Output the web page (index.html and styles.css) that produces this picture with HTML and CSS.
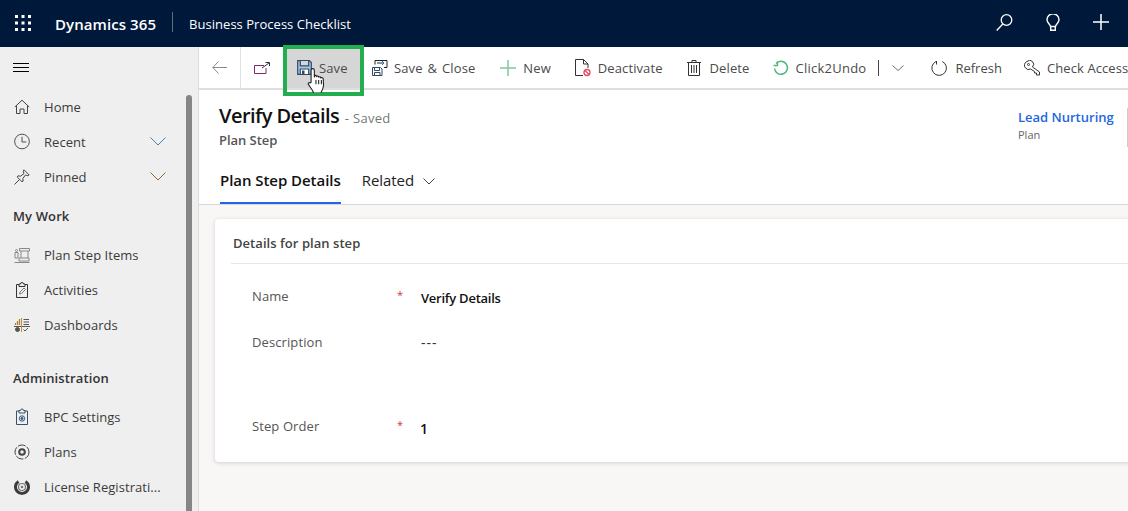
FILE: index.html
```html
<!DOCTYPE html>
<html lang="en">
<head>
<meta charset="utf-8">
<title>Business Process Checklist</title>
<link rel="stylesheet" href="styles.css">
</head>
<body>
<header class="topbar">
  <svg class="waffle" width="16" height="16" viewBox="0 0 16 16"><g fill="#fff"><rect x="0" y="0" width="3" height="3"/><rect x="6.500" y="0" width="3" height="3"/><rect x="13" y="0" width="3" height="3"/><rect x="0" y="6.500" width="3" height="3"/><rect x="6.500" y="6.500" width="3" height="3"/><rect x="13" y="6.500" width="3" height="3"/><rect x="0" y="13" width="3" height="3"/><rect x="6.500" y="13" width="3" height="3"/><rect x="13" y="13" width="3" height="3"/></g></svg>
  <span class="brand">Dynamics 365</span>
  <span class="divider"></span>
  <span class="appname">Business Process Checklist</span>
  <div class="top-actions">
    <svg width="17" height="17" viewBox="0 0 17 17" fill="none" stroke="#fff" stroke-width="1.300"><circle cx="10.500" cy="6" r="5.300"/><path d="M6.800 10L.7 16.500"/></svg>
    <svg width="14" height="17" viewBox="0 0 14 17" fill="none" stroke="#fff" stroke-width="1.400"><path d="M4.500 12.500C4 9.500 1 9 1 5.800a6 6 0 0 1 12 0c0 3.200-3 3.700-3.500 6.700zM4.700 12.500v3.800h4.600v-3.800"/></svg>
    <svg width="16" height="16" viewBox="0 0 16 16" stroke="#fff" stroke-width="1.500"><path d="M8 0v16M0 8h16"/></svg>
  </div>
</header>
<div class="shell">
  <nav class="sidebar">
    <button class="hamburger" aria-label="Menu"><svg width="16" height="10" viewBox="0 0 16 10" stroke="#000" stroke-width="1"><path d="M0 .5h16M0 4.500h16M0 8.500h16"/></svg></button>
    <div class="scrollbar"></div>
    <ul class="navlist first">
      <li><svg class="ni" width="16" height="16" viewBox="0 0 16 16" fill="none" stroke="#444" stroke-width="1"><path d="M.8 8L8 1.200 15.200 8M2.500 6.500V14.500H6V10h4v4.500h3.500V6.500"/></svg>Home</li>
      <li><svg class="ni" width="16" height="17" viewBox="0 0 17 17" fill="none" stroke="#444" stroke-width="1"><circle cx="8.500" cy="8.500" r="7.800"/><path d="M8.500 3.500V9H13"/></svg>Recent<svg class="chev" width="16" height="9" viewBox="0 0 16 9" fill="none" stroke="#4a7fb0" stroke-width="1"><path d="M.5.500L8 8l7.500-7.500"/></svg></li>
      <li><svg class="ni" width="16" height="16" viewBox="0 0 16 16" fill="none" stroke="#444" stroke-width="1"><path d="M10 .8L15.200 6 13.800 6.700 11.500 6 8.800 9.500 9.200 12 8 12.800 3.200 8 4 6.800 6.500 7.200 10 4.500 9.300 2.200zM5.500 10.500L.5 15.500"/></svg>Pinned<svg class="chev" width="16" height="9" viewBox="0 0 16 9" fill="none" stroke="#8a6a30" stroke-width="1"><path d="M.5.500L8 8l7.500-7.500"/></svg></li>
    </ul>
    <h2 class="group group-work">My Work</h2>
    <ul class="navlist">
      <li><svg class="ni" width="16" height="16" viewBox="0 0 16 16" fill="none" stroke="#888" stroke-width="1"><path d="M5.500 1.500H15.500V4H5.500zM7 4v7M14 4v7M5 11h10v3H5zM1 5.500h3V11H1zM2.500 2.500a1 1 0 1 1 0 2 1 1 0 1 1 0-2zM.5 15.500h15"/></svg>Plan Step Items</li>
      <li><svg class="ni" width="16" height="16" viewBox="0 0 16 16" fill="none" stroke="#333" stroke-width="1"><path d="M5 2.500H2.500v13h11v-13H11M5 4.500V2H6.500a1.500 1.500 0 0 1 3 0H11v2.500z"/><path d="M5.500 12l.5-2 4-4 1.500 1.500-4 4z" stroke="#777"/></svg>Activities</li>
      <li><svg class="ni" width="16" height="16" viewBox="0 0 16 16" fill="none" stroke="#555" stroke-width="1"><path d="M0 9.500h16"/><path d="M7.500 1v14" stroke="#c98a3a"/><path d="M1.500 8V6M3.500 8V4M5.500 8V2" stroke="#b57b34" stroke-width="1.300"/><path d="M9.500 2.500H15M9.500 5H15M9.500 7.500H15M9.500 12.500l1.500 1.500 3-3"/><circle cx="3.500" cy="12.500" r="2" fill="#555"/></svg>Dashboards</li>
    </ul>
    <h2 class="group group-admin">Administration</h2>
    <ul class="navlist">
      <li><svg class="ni" width="16" height="17" viewBox="0 0 16 17" fill="none" stroke="#33536f" stroke-width="1"><path d="M5 3H2.500v13.500h11V3H11M5 5V2.500H6.500a1.500 1.500 0 0 1 3 0H11V5z"/><circle cx="8" cy="10.500" r="2.700"/><circle cx="8" cy="10.500" r="1" fill="#33536f"/></svg>BPC Settings</li>
      <li><svg class="ni" width="16" height="16" viewBox="0 0 16 16" fill="none" stroke="#444"><circle cx="8" cy="8" r="7" stroke-width="1" stroke-dasharray="8 1.500"/><circle cx="8" cy="8" r="2.800" stroke-width="2"/></svg>Plans</li>
      <li><svg class="ni" width="16" height="16" viewBox="0 0 16 16" fill="none"><path d="M4.500 2.500a6.500 6.500 0 1 0 7 0" stroke="#3c3c3c" stroke-width="3"/><circle cx="8" cy="8" r="3.500" stroke="#777" stroke-width="1.200"/><circle cx="8" cy="8" r="1.300" fill="#777"/></svg><span class="trunc">License Registrati...</span></li>
    </ul>
  </nav>
  <main class="content">
    <div class="commandbar">
      <button class="cmd back" aria-label="Back"><svg width="15" height="13" viewBox="0 0 15 13" fill="none" stroke="#8a8a8a" stroke-width="1"><path d="M6.500.5L.8 6.500l5.700 6M1 6.500h14"/></svg></button>
      <button class="cmd popout" aria-label="Open"><svg width="16" height="12" viewBox="0 0 16 12" fill="none" stroke-width="1"><path d="M10 3.500H.5v8H12V6" stroke="#7a2a6a"/><path d="M8 6l7-5M11.500 .5H15.500V4" stroke="#333"/></svg></button>
      <button class="cmd save"><svg width="15" height="15" viewBox="0 0 15 15" fill="none" stroke="#2e4a66" stroke-width="1.200"><path d="M.7.700H12.500L14.300 2.500v11.800H.7z" fill="#a9cbe8"/><path d="M3.300 1v4.800h8.400V1" fill="#d6d6d6"/><path d="M3.300 14V9h8.400v5" fill="#fff"/><rect x="5" y="10.500" width="2.500" height="3.500" fill="#2e4a66" stroke="none"/></svg><span>Save</span></button>
      <button class="cmd saveclose"><svg width="16" height="16" viewBox="0 0 16 16" fill="none" stroke="#2e4a66" stroke-width="1"><path d="M.5 7.500H8.500L10 9v6.500H.5zM2.500 7.500v3h5v-3M2.500 15.500v-3h5.500v3"/><path d="M3 4.500V.5h12v7h-3M5 3h7" stroke="#222"/><path d="M10 1l2 2-2 2" stroke="#2b78c5"/></svg><span>Save &amp; Close</span></button>
      <button class="cmd new"><svg width="16" height="16" viewBox="0 0 16 16" stroke="#7fc8a0" stroke-width="1.500"><path d="M8 0v16M0 8h16"/></svg><span>New</span></button>
      <button class="cmd deact"><svg width="16" height="18" viewBox="0 0 16 18" fill="none" stroke="#333" stroke-width="1"><path d="M8 16.500H.5V.5H8.500L13 5V9M8.500.5V5H13"/><circle cx="12" cy="13.500" r="3" stroke="#e04c5e" stroke-width="1.300"/><path d="M10 11.500l4 4" stroke="#e04c5e" stroke-width="1.300"/></svg><span>Deactivate</span></button>
      <button class="cmd del"><svg width="14" height="16" viewBox="0 0 14 16" fill="none" stroke="#333" stroke-width="1"><path d="M0 2.500h14M5 2.500V.5h4v2M1.500 2.500v13h11v-13M4.500 5v8M7 5v8M9.500 5v8"/></svg><span>Delete</span></button>
      <button class="cmd undo"><svg width="16" height="16" viewBox="0 0 16 16" fill="none" stroke="#4ab87a" stroke-width="1.500"><path d="M3 3.500A6.500 6.500 0 1 1 1.500 8.500"/><path d="M.5 5.500H4.500V1.500" stroke-width="1.300"/></svg><span>Click2Undo</span></button>
      <span class="cmd-sep"></span>
      <svg class="cmd-chev" width="12" height="6" viewBox="0 0 12 6" fill="none" stroke="#6b6b6b" stroke-width="1"><path d="M.5.500L6 5.500l5.500-5"/></svg>
      <button class="cmd refresh"><svg width="16" height="16" viewBox="0 0 16 16" fill="none" stroke="#333" stroke-width="1"><path d="M5 1.500A7.300 7.300 0 1 0 11.300 1.500M5.500 1V4.500"/></svg><span>Refresh</span></button>
      <button class="cmd access"><svg width="16" height="16" viewBox="0 0 16 16" fill="none" stroke="#333" stroke-width="1"><path d="M3 1.500a4 4 0 0 1 5.500 0 4 4 0 0 1 0 5.500L15.500 12v3h-3v-2h-2v-1.500L6.500 9a4 4 0 0 1-5-1 4 4 0 0 1 1.500-6.500z"/><circle cx="4.500" cy="4.500" r="1"/></svg><span>Check Access</span></button>
    </div>
    <section class="formhead">
      <div class="titles">
        <h1>Verify Details <small>- Saved</small></h1>
        <p class="entity">Plan Step</p>
      </div>
      <div class="headright">
        <a class="lead" href="#">Lead Nurturing</a>
        <span class="leadsub">Plan</span>
      </div>
    </section>
    <div class="tabs">
      <span class="tab active">Plan Step Details</span>
      <span class="tab">Related<svg width="12" height="7" viewBox="0 0 12 7" fill="none" stroke="#444" stroke-width="1"><path d="M.5.500L6 6l5.500-5.500"/></svg></span>
    </div>
    <div class="canvas">
      <section class="card">
        <h3>Details for plan step</h3>
        <div class="rows">
          <div class="row r-name"><label>Name</label><span class="req">*</span><strong>Verify Details</strong></div>
          <div class="row r-desc"><label>Description</label><span class="req"></span><span class="val dash">---</span></div>
          <div class="row r-order"><label>Step Order</label><span class="req">*</span><span class="val num">1</span></div>
        </div>
      </section>
    </div>
  </main>
</div>
<div class="highlight">
  <svg class="hand" width="19" height="26" viewBox="0 0 17 24"><path d="M5 1.500c1 0 1.500.5 1.500 1.500v6.500l.5-2c1 0 1.500.5 1.500 1.200.8-.6 1.800-.3 2 .6.800-.5 1.800-.2 2 .7.800-.4 2-.1 2.200 1l.3 5.500c0 3-1.500 5.500-2.500 7.500H6c-1-2.500-3-5-5-8-.5-1 .5-2 1.700-1.300L3.500 14V3c0-1 .6-1.500 1.500-1.500z" fill="#fff" stroke="#222" stroke-width="1"/><path d="M8 12v4M10.500 12v4M13 12v4" stroke="#222" stroke-width="1"/></svg>
</div>
</body>
</html>
```
FILE: styles.css
```css
* { box-sizing: border-box; }
html, body { margin: 0; height: 100%; overflow: hidden; }
body { font-family: "Open Sans", "Noto Sans", sans-serif; color: #333; background: #fff; position: relative; font-size: 13px; }
button { font: inherit; color: inherit; border: 0; background: none; padding: 0; }
ul { list-style: none; margin: 0; padding: 0; }
h1, h2, h3, p { margin: 0; }

.topbar { height: 47px; background: #001839; color: #fff; display: flex; align-items: center; padding-left: 15px; }
.waffle { flex: none; margin-bottom: 2px; }
.brand { margin-left: 24px; font-size: 15px; font-weight: 600; letter-spacing: .08px; }
.divider { width: 1px; height: 20px; background: #5f6c80; margin: 0 16px 3px; }
.appname { font-size: 13px; letter-spacing: .03px; }
.top-actions { margin-left: auto; display: flex; align-items: center; gap: 33px; padding: 0 19px 3px 0; }

.shell { display: flex; height: 464px; }
.sidebar { width: 199px; flex: none; background: #efefef; border-right: 1px solid #dcdcdc; position: relative; padding-top: 7px; }
.hamburger { display: block; height: 28px; margin-left: 13px; }
.scrollbar { position: absolute; left: 186px; top: 48px; bottom: 0; width: 6px; background: #868686; border-radius: 3px 3px 0 0; }
.navlist li { height: 35px; display: flex; align-items: center; padding-left: 14px; letter-spacing: .05px; color: #3b3b3b; white-space: nowrap; }
.navlist.first { margin-top: 7px; }
.ni { flex: none; margin-right: 14px; }
.chev { margin-left: auto; margin-right: 32px; }
.group { font-size: 13px; font-weight: 600; letter-spacing: .12px; color: #333; padding-left: 13px; line-height: 18px; }
.group-work { margin: 13px 0 12px; }
.group-admin { margin: 27px 0 12px; }

.content { flex: 1; min-width: 0; display: flex; flex-direction: column; }
.commandbar { height: 43px; flex: none; display: flex; align-items: center; border-bottom: 2px solid #dedede; white-space: nowrap; }
.cmd { display: flex; align-items: center; gap: 7px; height: 41px; letter-spacing: .1px; color: #4a4a4a; flex: none; }
.back { width: 42px; justify-content: center; border-right: 1px solid #e2e2e2; }
.popout { width: 43px; justify-content: center; border-right: 1px solid #e2e2e2; }
.save { width: 78px; background: #d6d6d6; padding-left: 13px; }
.saveclose { margin-left: 10px; gap: 6px; word-spacing: 1.500px; }
.new { margin-left: 25px; }
.deact { margin-left: 24px; }
.del { margin-left: 24px; gap: 9px; }
.undo { margin-left: 24px; gap: 6px; letter-spacing: .25px; }
.cmd-sep { width: 1px; height: 16px; background: #444; margin-left: 12px; flex: none; }
.cmd-chev { margin-left: 13px; flex: none; }
.refresh { margin-left: 27px; gap: 8px; letter-spacing: 0; }
.access { margin-left: 22px; gap: 7px; }

.formhead { height: 70px; flex: none; display: flex; justify-content: space-between; padding: 12px 0 0 20px; }
.formhead h1 { font-size: 20px; font-weight: 600; line-height: 28px; color: #111; letter-spacing: -.55px; }
.formhead small { font-size: 13px; font-weight: 400; color: #777; margin-left: 1px; letter-spacing: .3px; }
.entity { font-size: 13px; font-weight: 600; color: #555; letter-spacing: -.05px; line-height: 17px; }
.headright { width: 111px; border-right: 1px solid #ccc; height: 39px; margin-top: 6px; padding-left: 1px; display: flex; flex-direction: column; }
.lead { color: #2266e3; font-size: 13px; font-weight: 600; line-height: 18px; text-decoration: none; letter-spacing: 0; white-space: nowrap; }
.leadsub { font-size: 11px; line-height: 18px; color: #666; }

.tabs { height: 45px; flex: none; display: flex; gap: 21px; padding-left: 21px; border-bottom: 1px solid #d8d8d8; }
.tab { font-size: 15px; line-height: 40px; height: 44px; color: #222; letter-spacing: -.05px; display: flex; align-items: flex-start; gap: 9px; }
.tab svg { margin-top: 18px; }
.tab.active { font-weight: 600; border-bottom: 2px solid #2266e3; color: #111; letter-spacing: -.05px; }

.canvas { flex: 1; background: #f8f7f6; padding: 14px 0 0 16px; overflow: hidden; }
.card { background: #fff; height: 243px; width: 960px; border-radius: 4px 0 0 4px; box-shadow: 0 1px 4px rgba(0,0,0,.16); padding: 0 0 0 16px; }
.card h3 { font-size: 13px; font-weight: 600; color: #444; letter-spacing: .05px; height: 45px; line-height: 48px; border-bottom: 1px solid #e6e6e6; padding-left: 2px; }
.row { display: flex; padding-left: 21px; letter-spacing: .1px; }
.row label { width: 145px; color: #555; }
.req { width: 24px; color: #d13438; font-size: 11px; }
.row strong { font-weight: 600; color: #111; font-size: 13px; letter-spacing: -.25px; padding-top: 2px; }
.val { color: #333; }
.dash { font-size: 14px; letter-spacing: 1px; }
.num { font-weight: 600; color: #111; font-size: 14px; padding-top: 2px; margin-left: -1px; }
.r-name { padding-top: 23px; height: 69px; }
.r-desc { height: 84px; }

.highlight { position: absolute; left: 283px; top: 45px; width: 81px; height: 51px; border: 4px solid #22ae4f; }
.hand { position: absolute; left: 20px; top: 18px; }
```
